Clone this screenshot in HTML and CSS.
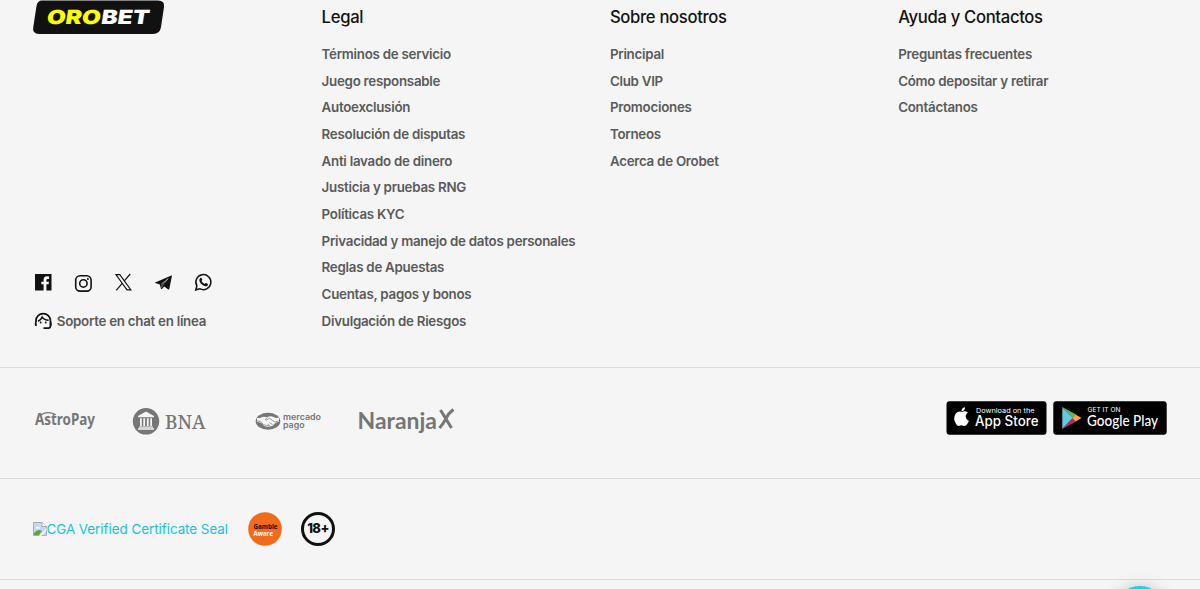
FILE: index.html
```html
<!DOCTYPE html>
<html lang="es">
<head>
    <meta charset="UTF-8">
    <title>Orobet</title>
    <link rel="stylesheet" href="styles.css">
</head>
<body>
    <footer class="footer">
        <div class="footer-top">
            <div class="brand">
                <a href="#" class="logo">
                    <svg width="132" height="34" viewBox="0 0 132 34">
                        <path d="M9 0.500H125Q132 0.500 131 7L128 27Q127 34 120 34H6Q-1 34 0.300 27L3.500 6Q4.500 0.500 9 0.500Z" fill="#111"/>
                        <g transform="translate(12.500 24) skewX(-9)" class="logo-text">
                            <text x="0.500" y="0" textLength="54" lengthAdjust="spacingAndGlyphs" fill="#ff0">ORO</text>
                            <text x="55" y="0" textLength="48" lengthAdjust="spacingAndGlyphs" fill="#fff">BET</text>
                        </g>
                    </svg>
                </a>
                <div class="brand-bottom">
                    <div class="socials">
                        <a href="#"><svg width="20" height="20" viewBox="0 0 20 20"><path fill="#111" d="M2 2H18.500V18.500H13.400V12.300H15.600L16 9.800H13.400V8.200Q13.400 6.900 14.600 6.900H16.100V4.600Q10.400 3.400 10.600 8.200V9.800H8.300V12.300H10.600V18.500H2Z"/></svg></a>
                        <a href="#" class="instagram"><svg width="20" height="20" viewBox="0 0 20 20" fill="none" stroke="#111" stroke-width="1.600"><rect x="2.700" y="2.700" width="15.400" height="15.400" rx="4.400"/><circle cx="10.400" cy="10.400" r="3.700"/><circle cx="14.900" cy="5.900" r="1" fill="#111" stroke="none"/></svg></a>
                        <a href="#"><svg width="20" height="20" viewBox="0 0 20 20" fill="none" stroke="#111"><path d="M2.900 2.600H6.800L17.900 17.900H14Z" stroke-width="1.100"/><path d="M17.200 2L11.100 9.100M9.200 11.400L3.200 18.300" stroke-width="1.200"/></svg></a>
                        <a href="#"><svg width="20" height="20" viewBox="0 0 20 20"><path fill="#111" d="M1.600 10.800L18.400 3.400Q19 3.200 18.900 4L16.300 17Q16.100 17.900 15.300 17.400L11.200 14.400L8.900 16.900Q8.200 17.500 7.900 16.400L6.800 12.600Z"/><path d="M8 12.400L15.200 6.600L9.300 13.300L8.500 15.600" fill="none" stroke="#f5f5f5" stroke-width="0.500"/></svg></a>
                        <a href="#"><svg width="20" height="20" viewBox="0 0 20 20"><path d="M2.800 17.800L3.900 13.900A7.500 7.500 0 1 1 6.800 16.700Z" fill="none" stroke="#111" stroke-width="1.500"/><path fill="#111" d="M7.300 5.900Q8.100 5.200 8.600 6.200L9.300 7.800Q9.400 8.200 8.500 9.100Q9.600 11.100 11.700 12.100L12.600 11.100Q13 10.800 14.900 11.900Q15.100 14.300 12.600 14.300Q8.800 13.900 6.600 9.600Q5.600 7.400 7.300 5.900Z"/></svg></a>
                    </div>
                    <a href="#" class="support">
                        <svg width="20" height="20" viewBox="0 0 20 20"><path d="M3 11V9.600A7.200 7 0 0 1 17.400 9.600V15Q17.400 17.100 15.400 17.100H10.500" fill="none" stroke="#111" stroke-width="1.700"/><path d="M3.500 10.500H2.200Q1.600 12.500 2 14.500Q2.300 15.200 3.800 15Z M17 10.500H18.300Q18.900 12.500 18.600 14.500Q18.200 15.200 17 15Z" fill="#111"/><path d="M5 10.200Q8.200 8.900 9.200 6.100Q11.300 9.200 15.600 9.200" fill="none" stroke="#111" stroke-width="1.500"/><circle cx="7.700" cy="11.500" r="0.900" fill="#111"/><circle cx="12.700" cy="11.500" r="0.900" fill="#111"/></svg>
                        <span>Soporte en chat en línea</span>
                    </a>
                </div>
            </div>
            <div class="column">
                <h3 class="column-title">Legal</h3>
                <ul class="links">
                    <li><a href="#">Términos de servicio</a></li>
                    <li><a href="#">Juego responsable</a></li>
                    <li><a href="#">Autoexclusión</a></li>
                    <li><a href="#">Resolución de disputas</a></li>
                    <li><a href="#">Anti lavado de dinero</a></li>
                    <li><a href="#">Justicia y pruebas RNG</a></li>
                    <li><a href="#">Políticas KYC</a></li>
                    <li><a href="#">Privacidad y manejo de datos personales</a></li>
                    <li><a href="#">Reglas de Apuestas</a></li>
                    <li><a href="#">Cuentas, pagos y bonos</a></li>
                    <li><a href="#">Divulgación de Riesgos</a></li>
                </ul>
            </div>
            <div class="column">
                <h3 class="column-title">Sobre nosotros</h3>
                <ul class="links">
                    <li><a href="#">Principal</a></li>
                    <li><a href="#">Club VIP</a></li>
                    <li><a href="#">Promociones</a></li>
                    <li><a href="#">Torneos</a></li>
                    <li><a href="#">Acerca de Orobet</a></li>
                </ul>
            </div>
            <div class="column">
                <h3 class="column-title">Ayuda y Contactos</h3>
                <ul class="links">
                    <li><a href="#">Preguntas frecuentes</a></li>
                    <li><a href="#">Cómo depositar y retirar</a></li>
                    <li><a href="#">Contáctanos</a></li>
                </ul>
            </div>
        </div>

        <div class="footer-payments">
            <div class="payments">
                <svg class="astropay" width="64" height="34" viewBox="0 0 64 34">
                    <text x="2" y="22" textLength="60" lengthAdjust="spacingAndGlyphs">AstroPay</text>
                    <path d="M8 12Q14 7.500 23 11.700" fill="none" stroke="#767676" stroke-width="1.200"/>
                </svg>
                <svg class="bna" width="74" height="34" viewBox="0 0 74 34">
                    <circle cx="14" cy="17.300" r="13.200" fill="#767676"/>
                    <g fill="#f5f5f5">
                        <path d="M14 7.500L22 12V13.300H6V12Z"/>
                        <path d="M8 14.200H9.800V22H8ZM11.300 14.200H13.100V22H11.300ZM14.900 14.200H16.700V22H14.900ZM18.200 14.200H20V22H18.200ZM7 22.500H21V23.700H7ZM6 24.300H22V25.700H6Z"/>
                    </g>
                    <text x="33" y="25" textLength="40.500" lengthAdjust="spacingAndGlyphs">BNA</text>
                </svg>
                <svg class="mercado" width="68" height="34" viewBox="0 0 68 34">
                    <ellipse cx="13" cy="17.200" rx="12.300" ry="8.500" fill="#767676"/>
                    <path d="M2 14Q5.500 14.500 8 12.700L12.500 13Q15.500 11.500 19 13.200Q21.500 14.400 24 13.500V17.500L20.500 19Q17.500 23 14 22.500Q9.500 23.500 7 19.500L2 17.500Z" fill="#f5f5f5"/>
                    <path d="M2.500 16.800Q6.500 17.500 8.500 20.500Q11.500 22 13.500 21.500M23.500 16.800L20 18.200L14.500 14.300L11 16.300Q9.500 16 12.500 13M14.500 18.500L17.500 20.500M12.500 20L15 21.800" fill="none" stroke="#767676" stroke-width="0.700"/>
                    <text x="28" y="16" textLength="38" lengthAdjust="spacingAndGlyphs">mercado</text>
                    <text x="28" y="23.500" textLength="21.500" lengthAdjust="spacingAndGlyphs">pago</text>
                </svg>
                <svg class="naranja" width="98" height="34" viewBox="0 0 98 34">
                    <text x="-0.500" y="24.500" textLength="79.500" lengthAdjust="spacingAndGlyphs">Naranja</text>
                    <path d="M82.500 6L93.500 24M95.500 5.500Q90.500 9 88 14.700Q85 20 81.500 24" fill="none" stroke="#767676" stroke-width="3"/>
                </svg>
            </div>
            <div class="stores">
                <a href="#" class="store">
                    <svg width="101" height="34" viewBox="0 0 101 34">
                        <rect x="0.500" y="0.300" width="100" height="33.400" rx="3" fill="#000"/>
                        <path fill="#fff" d="M16.100 11Q18.800 9.400 21.900 11.600Q18.300 14.400 20.600 18Q21.500 19.200 22.900 19.900Q19.800 26.700 16.400 24.600Q15.300 24.100 14.200 24.600Q11.600 26 9.800 22.500Q6.700 17.500 9.600 12.800Q12.100 9.500 16.100 11ZM15.300 10.400Q15.300 7.100 19 6.200Q19.200 9.800 15.300 10.400Z"/>
                        <text class="store-small" x="30" y="11.700" textLength="58.500" lengthAdjust="spacingAndGlyphs">Download on the</text>
                        <text class="store-name" x="29" y="25" textLength="63.500" lengthAdjust="spacingAndGlyphs">App Store</text>
                    </svg>
                </a>
                <a href="#" class="store">
                    <svg width="114" height="34" viewBox="0 0 114 34">
                        <rect x="0.300" y="0.300" width="113.400" height="33.400" rx="3" fill="#000"/>
                        <path d="M9.300 6L20 17L9.300 28Z" fill="#62cbe3"/>
                        <path d="M9.300 6L23 13.600L19.500 17Z" fill="#65b55b"/>
                        <path d="M9.300 28L23 20.400L19.500 17Z" fill="#b32b64"/>
                        <path d="M22.700 13.400L28.500 17L22.700 20.600L19.300 17Z" fill="#f8a72f"/>
                        <text class="store-small" x="34.500" y="10.700" textLength="33" lengthAdjust="spacingAndGlyphs">GET IT ON</text>
                        <text class="store-name google" x="34" y="25" textLength="71" lengthAdjust="spacingAndGlyphs">Google Play</text>
                    </svg>
                </a>
            </div>
        </div>

        <div class="footer-seals">
            <a href="#" class="certificate">
                <svg width="14" height="14" viewBox="0 0 14 14">
                    <path d="M0.500 0.500H9L13.500 4.500V13.500H0.500Z" fill="#c6d7f5" stroke="#aaa"/>
                    <path d="M9 0.500V4.500H13.500" fill="#fff" stroke="#aaa"/>
                    <path d="M2.500 6.500Q3 4.500 4.500 5Q6 3.500 7 6.500Z" fill="#fff"/>
                    <path d="M1 13V11Q5 6 9 9L6 13Z" fill="#58a748"/>
                    <path d="M6 14L13.800 6V8L8.500 14Z" fill="#f5f5f5"/>
                </svg><span>CGA Verified Certificate Seal</span>
            </a>
            <svg class="gamble" width="34" height="34" viewBox="0 0 34 34">
                <circle cx="17" cy="17" r="16.800" fill="#f26b1d"/>
                <text x="5.500" y="17" textLength="24" lengthAdjust="spacingAndGlyphs" fill="#111">Gamble</text>
                <text x="5.500" y="23.500" textLength="19.500" lengthAdjust="spacingAndGlyphs" fill="#fff">Aware</text>
            </svg>
            <div class="age">18+</div>
        </div>
    </footer>
    <button class="chat-btn" aria-label="Chat"></button>
</body>
</html>
```
FILE: styles.css
```css
* {
    box-sizing: border-box;
}

body {
    margin: 0;
    height: 589px;
    overflow: hidden;
    background: #f5f5f5;
    font-family: Inter, "Liberation Sans", sans-serif;
    color: #111;
}

a {
    color: inherit;
    text-decoration: none;
}

svg {
    display: block;
    flex-shrink: 0;
    overflow: visible;
}

.footer-top {
    display: grid;
    grid-template-columns: repeat(4, 288.300px);
    height: 368px;
    padding-left: 33.300px;
    border-bottom: 1px solid #dadada;
}

.brand {
    display: flex;
    flex-direction: column;
    justify-content: space-between;
    height: 334px;
}

.logo-text {
    font-size: 19.500px;
    font-weight: 900;
}

.socials {
    display: flex;
    gap: 20px;
    height: 20px;
}

.instagram {
    padding-top: 1px;
}

.support {
    display: flex;
    align-items: center;
    gap: 3.500px;
    height: 27px;
    margin-top: 15px;
    color: #5a5a5a;
    font-size: 13.330px;
    font-weight: 600;
    letter-spacing: -0.270px;
}

.column-title {
    margin: 0;
    padding-top: 4px;
    line-height: 27px;
    font-size: 16.670px;
    font-weight: 500;
    letter-spacing: -0.330px;
}

.links {
    list-style: none;
    margin: 10px 0 0;
    padding: 0;
    color: #5a5a5a;
    font-size: 13.330px;
    font-weight: 600;
    letter-spacing: -0.260px;
    line-height: 26.670px;
    white-space: nowrap;
}

.footer-payments {
    display: flex;
    justify-content: space-between;
    align-items: center;
    height: 111px;
    padding: 0 33px 11px;
    border-bottom: 1px solid #dadada;
}

.payments {
    display: flex;
    align-items: center;
    fill: #767676;
}

.astropay {
    margin: 4px 35px 0 0;
    font: 700 16px "Noto Sans", sans-serif;
}

.bna {
    margin: 6px 49px 0 -0.500px;
    font: 500 19px "Noto Serif", "DejaVu Serif", serif;
}

.mercado {
    margin: 6px 35px 0 0;
    font: 600 8.500px Inter, sans-serif;
}

.naranja {
    margin-top: 6px;
    font: 700 22px Lato, sans-serif;
}

.stores {
    display: flex;
    gap: 6px;
}

.store-small {
    fill: #fff;
    font-size: 6.500px;
    font-weight: 400;
}

.store-name {
    fill: #fff;
    font-size: 14px;
    font-weight: 500;
}

.google {
    font-family: Lato, sans-serif;
    font-size: 14.500px;
}

.footer-seals {
    display: flex;
    align-items: center;
    height: 101px;
    padding-left: 33px;
    border-bottom: 1px solid #dadada;
}

.certificate {
    display: flex;
    align-items: center;
    color: #12c4dc;
    font-size: 13.330px;
    white-space: nowrap;
}

.certificate svg {
    margin-top: -1px;
}

.certificate span {
    margin-left: -0.500px;
}

.gamble {
    margin: 0 19.500px;
    font: 700 7px "Open Sans", sans-serif;
}

.age {
    width: 34px;
    height: 34px;
    border: 3px solid #111;
    border-radius: 50%;
    line-height: 27px;
    text-align: center;
    font-size: 13px;
    font-weight: 800;
    letter-spacing: -0.500px;
}

.chat-btn {
    position: absolute;
    left: 1113px;
    top: 586px;
    width: 54px;
    height: 54px;
    border: none;
    border-radius: 50%;
    background: #22cfe0;
    box-shadow: 0 2px 16px rgba(0, 0, 0, 0.250);
}
```
